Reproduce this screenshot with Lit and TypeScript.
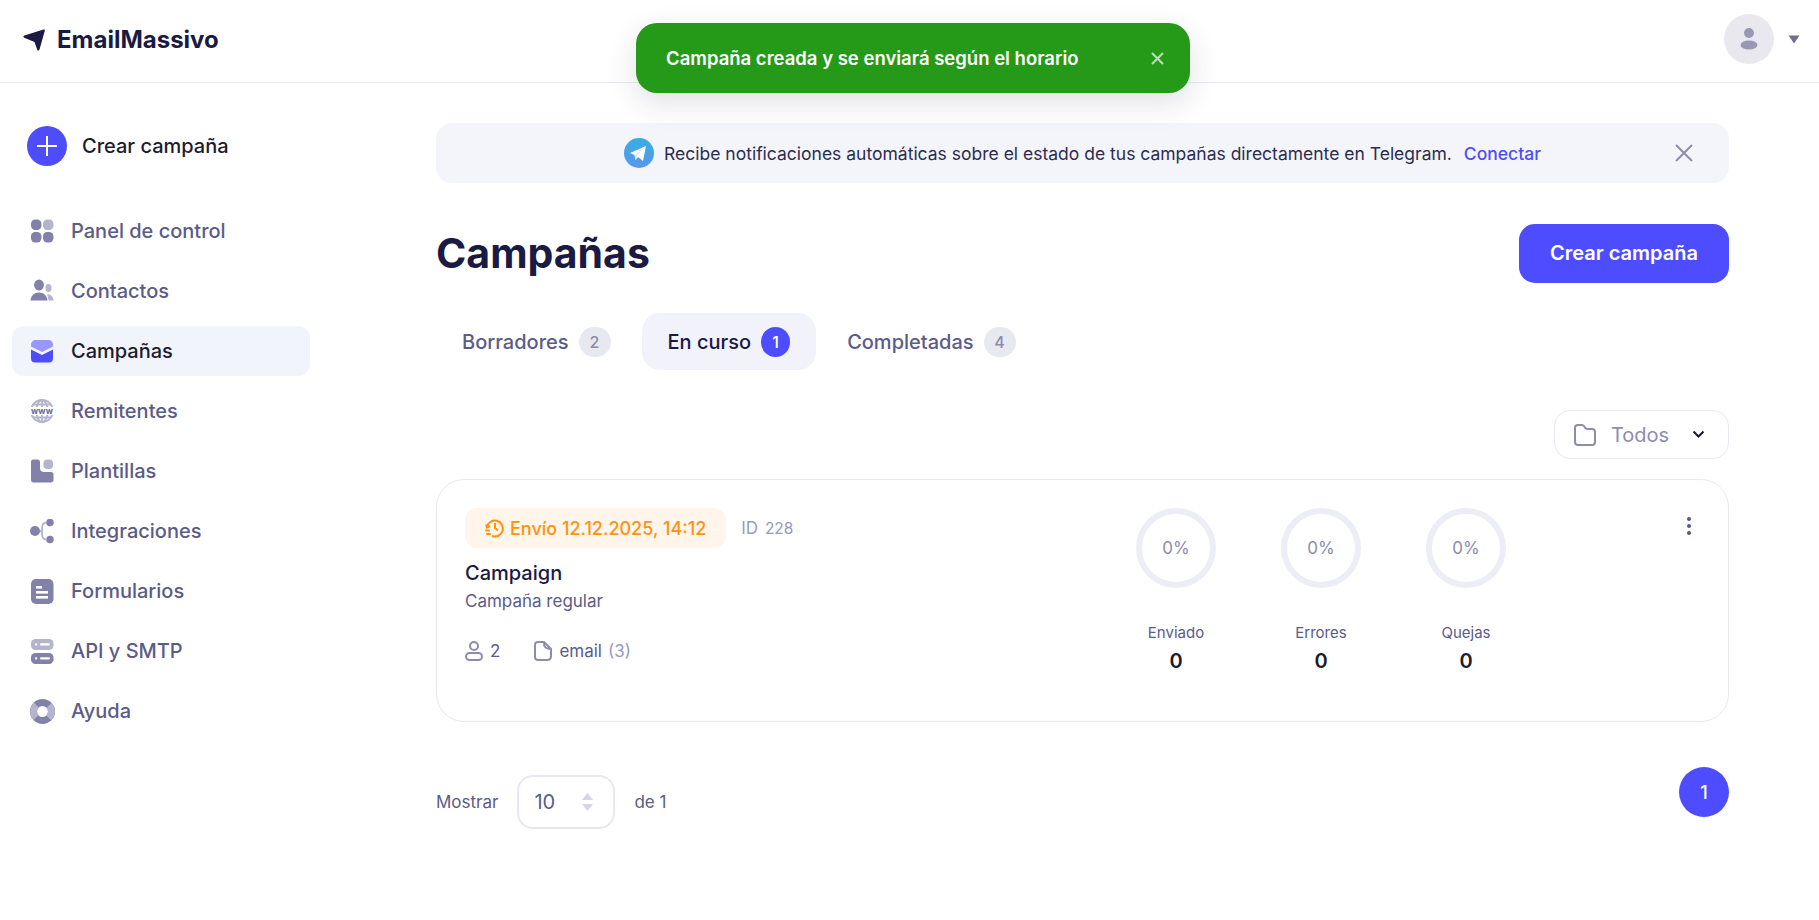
import { LitElement, html, css, svg } from 'lit';
import { customElement } from 'lit/decorators.js';

const DARK = '#8181aa';
const LIGHT = '#b4b4cd';

const icons: Record<string, unknown> = {
  panel: svg`<rect x="1" y="0.5" width="10.4" height="10.4" rx="4.2" fill=${DARK}/><rect x="13" y="0.5" width="10.4" height="10.4" rx="4.2" fill=${LIGHT}/><rect x="1" y="13" width="10.4" height="10.4" rx="4.2" fill=${DARK}/><rect x="13" y="13" width="10.4" height="10.4" rx="4.2" fill=${DARK}/>`,
  contactos: svg`<ellipse cx="9" cy="6" rx="4.9" ry="5.6" fill=${DARK}/><path d="M0.5 21.5c.4-4.6 3.6-8 8.500-8s8 3.400 8.500 8z" fill=${DARK}/><ellipse cx="18.500" cy="9" rx="3" ry="4" fill=${LIGHT}/><path d="M17.200 15.500c3.300-.5 6 2 6.500 6h-5z" fill=${LIGHT}/>`,
  campanas: svg`<path d="M1 6c0-3 2-5 5-5h12c3 0 5 2 5 5v1.500l-11 5.500-11-5.500z" fill="#9797ff"/><path d="M1 10.500l11 5.500 11-5.500v9c0 2.500-1.500 4-4 4h-14c-2.500 0-4-1.500-4-4z" fill="#4d4dff"/>`,
  remitentes: svg`<g fill="none" stroke=${LIGHT} stroke-width="1.800"><circle cx="12" cy="12" r="11"/><ellipse cx="12" cy="12" rx="5.500" ry="11"/><path d="M12 1v22M3 5.500h18M3 18.500h18"/></g><rect x="-1" y="8" width="26" height="8" fill="#fff"/><text class="www" x="12" y="15" text-anchor="middle" fill="#65658f">www</text>`,
  plantillas: svg`<path d="M1 3c0-1.700 1-2.500 2.500-2.500h4c1.500 0 2.500 1 2.500 2.500v6c0 2.500 1.500 4 4 4h7c1.500 0 2.500 1 2.500 2.500v5.500c0 1.500-1 2.500-2.500 2.500h-17.500c-1.500 0-2.500-1-2.500-2.500z" fill=${DARK}/><rect x="13.500" y="0.500" width="9.500" height="9.500" rx="3.800" fill=${LIGHT}/>`,
  integraciones: svg`<circle cx="5" cy="12" r="5" fill=${DARK}/><circle cx="20" cy="3.500" r="3.800" fill=${DARK}/><circle cx="20" cy="20.500" r="3.800" fill=${DARK}/><path d="M16.500 3.500c-4 0-4.500 3-4.500 6v5c0 3 .5 6 4.500 6M10 12h2" fill="none" stroke=${LIGHT} stroke-width="1.800"/>`,
  formularios: svg`<rect x="1" y="0" width="22.500" height="25" rx="5" fill=${DARK}/><rect x="6" y="7" width="6" height="2.600" fill="#fff"/><rect x="6" y="12" width="12" height="2.600" fill="#fff"/><rect x="6" y="17" width="12" height="2.600" fill="#fff"/>`,
  api: svg`<rect x="1" y="0" width="22.500" height="11" rx="4.500" fill=${LIGHT}/><rect x="1" y="14" width="22.500" height="11" rx="4.500" fill=${DARK}/><rect x="5" y="4.300" width="2.200" height="2.200" rx="1" fill="#fff"/><rect x="10" y="4.300" width="10" height="2.200" rx="1" fill="#fff"/><rect x="5" y="18.300" width="2.200" height="2.200" rx="1" fill="#fff"/><rect x="10" y="18.300" width="10" height="2.200" rx="1" fill="#fff"/>`,
  ayuda: svg`<circle cx="12.500" cy="12.500" r="9" fill="none" stroke=${DARK} stroke-width="7"/><circle cx="12.500" cy="12.500" r="9" fill="none" stroke=${LIGHT} stroke-width="7" stroke-dasharray="14.100 14.200" stroke-dashoffset="7"/>`,
};

const nav = [
  { id: 'panel', label: 'Panel de control' },
  { id: 'contactos', label: 'Contactos' },
  { id: 'campanas', label: 'Campañas', active: true },
  { id: 'remitentes', label: 'Remitentes' },
  { id: 'plantillas', label: 'Plantillas' },
  { id: 'integraciones', label: 'Integraciones' },
  { id: 'formularios', label: 'Formularios' },
  { id: 'api', label: 'API y SMTP' },
  { id: 'ayuda', label: 'Ayuda' },
];

const tabs = [
  { label: 'Borradores', count: 2 },
  { label: 'En curso', count: 1, active: true },
  { label: 'Completadas', count: 4 },
];

const stats = ['Enviado', 'Errores', 'Quejas'];

@customElement('app-root')
export class AppRoot extends LitElement {
  static styles = css`
    :host {
      display: block;
      position: relative;
      height: 920px;
      overflow: hidden;
      background: #fff;
      font-family: Inter, 'Liberation Sans', sans-serif;
      color: #1a1a42;
    }
    svg { display: block; flex: none; }

    .topbar {
      height: 82px;
      border-bottom: 1px solid #e8e8f0;
      display: flex;
      align-items: center;
      padding: 0 19px 0 23px;
    }
    .logo { display: flex; align-items: center; gap: 12px; font-size: 24px; font-weight: 700; margin-top: -3px; }
    .account { margin-left: auto; display: flex; align-items: center; gap: 14px; margin-top: -4px; }
    .avatar {
      width: 50px; height: 50px; border-radius: 50%;
      background: #e8e8ee;
      display: flex; align-items: center; justify-content: center;
    }

    .toast {
      position: absolute;
      left: 636px; top: 23px;
      width: 554px; height: 70px;
      box-sizing: border-box;
      padding: 0 26px 0 30px;
      background: #259a19;
      border-radius: 21px;
      color: #fff;
      display: flex; align-items: center; justify-content: space-between;
      font-size: 18.500px; font-weight: 600;
      box-shadow: 0 10px 30px rgba(40, 40, 80, 0.14);
      white-space: nowrap;
    }

    .layout { display: flex; }
    .sidebar { width: 310px; margin-right: 126px; padding: 43px 0 0 12px; box-sizing: border-box; flex: none; }
    .create {
      display: flex; align-items: center; gap: 15px;
      margin-left: 15px; margin-bottom: 40px;
      font-size: 20px; font-weight: 500; color: #1c1c2e;
    }
    .create-dot {
      width: 40px; height: 40px; border-radius: 50%;
      background: #4d4dff;
      display: flex; align-items: center; justify-content: center;
    }
    .nav { display: flex; flex-direction: column; gap: 10px; }
    .nav-item {
      height: 50px; border-radius: 12px;
      display: flex; align-items: center; gap: 16px;
      padding-left: 18px;
      font-size: 20px; font-weight: 500; color: #5b5b88;
    }
    .nav-item.active { background: #f1f4fa; color: #1c1c2e; }

    .main { flex: 1; padding: 40px 90px 0 0; min-width: 0; }

    .banner {
      height: 60px; border-radius: 16px;
      background: #f4f5fb;
      position: relative;
      display: flex; align-items: center; justify-content: center;
      gap: 10px;
      font-size: 17.500px; color: #2c2c50;
      padding-right: 0;
    }
    .banner a { color: #4d4dff; margin-left: 2px; font-weight: 500; }
    .banner-close { position: absolute; right: 36px; top: 21px; }

    .title-row { display: flex; justify-content: space-between; align-items: center; margin-top: 40px; }
    h1 { margin: 0; font-size: 41px; font-weight: 700; line-height: 60px; }
    .primary {
      width: 210px; height: 59px; border-radius: 16px;
      background: #4d4dff; color: #fff;
      display: flex; align-items: center; justify-content: center;
      font-size: 20px; font-weight: 600;
    }

    .tabs { display: flex; margin-top: 30px; }
    .tab {
      height: 57px; box-sizing: border-box;
      padding: 0 26px;
      border-radius: 18px;
      display: flex; align-items: center; gap: 10px;
      font-size: 20px; font-weight: 500; color: #5b5b88;
    }
    .tab.active { background: #f2f3fa; color: #1a1a42; }
    .tab + .tab { margin-left: 5px; }
    .count {
      min-width: 30px; width: 32px; height: 30px; border-radius: 15px;
      background: #e8e8ef; color: #8c8cae;
      display: flex; align-items: center; justify-content: center;
      font-size: 16px; font-weight: 500;
    }
    .tab.active .count { background: #4d4dff; color: #fff; width: 29px; min-width: 29px; }

    .filter-row { display: flex; justify-content: flex-end; margin-top: 40px; }
    .filter {
      width: 175px; height: 49px; box-sizing: border-box;
      border: 1px solid #e8e8f0; border-radius: 16px;
      padding: 0 23px 0 18px;
      display: flex; align-items: center;
      font-size: 20px; color: #8c8cb0;
    }
    .filter span { margin-left: 14px; flex: 1; }

    .card {
      margin-top: 20px;
      height: 243px; box-sizing: border-box;
      border: 1px solid #e8e8f0; border-radius: 28px;
      padding: 28px 37px 0 28px;
      display: flex;
    }
    .info { width: 661px; flex: none; }
    .info-top { display: flex; align-items: center; gap: 15px; }
    .badge {
      height: 40px; padding: 0 20px; border-radius: 12px;
      background: #fff5ea; color: #ff9210;
      display: flex; align-items: center; gap: 5px;
      font-size: 18px; font-weight: 500;
    }
    .id { color: #9a9abb; font-size: 17px; }
    .id small { font-size: 15.500px; margin-left: 2px; }
    .name { margin-top: 11px; font-size: 20px; font-weight: 500; line-height: 28px; }
    .kind { margin-top: 2px; font-size: 17px; color: #5b5b88; line-height: 24px; }
    .meta { margin-top: 28px; display: flex; align-items: center; font-size: 17px; color: #5b5b88; }
    .meta .gap { margin-left: 7px; }
    .meta .doc { margin-left: 34px; }
    .meta .muted { color: #9a9abb; margin-left: 6px; }

    .stats { display: flex; gap: 45px; }
    .stat { width: 100px; display: flex; flex-direction: column; align-items: center; }
    .ring {
      width: 80px; height: 80px; box-sizing: border-box;
      border: 6px solid #ecedf5; border-radius: 50%;
      display: flex; align-items: center; justify-content: center;
      font-size: 17px; color: #8c8cac;
    }
    .stat-label { margin-top: 35px; font-size: 15px; line-height: 20px; color: #5b5b88; }
    .stat-value { margin-top: 5px; font-size: 20px; font-weight: 600; line-height: 26px; color: #1c1c2e; }
    .menu { margin-left: auto; display: flex; flex-direction: column; gap: 3px; padding-top: 9px; }
    .menu i { display: block; width: 4px; height: 4px; border-radius: 50%; background: #56568a; }

    .pager { margin-top: 45px; display: flex; align-items: flex-start; }
    .pager-left { display: flex; align-items: center; font-size: 17px; color: #5b5b88; margin-top: 8px; }
    .select {
      width: 98px; height: 54px; box-sizing: border-box;
      margin: 0 19px;
      border: 2px solid #e8e8ef; border-radius: 16px;
      padding: 0 20px 0 15px;
      display: flex; align-items: center; justify-content: space-between;
      font-size: 20px;
    }
    .page {
      margin-left: auto;
      width: 50px; height: 50px; border-radius: 50%;
      background: #4d4dff; color: #fff;
      display: flex; align-items: center; justify-content: center;
      font-size: 18px; font-weight: 500;
    }
    .www { font: 700 8.500px Inter, sans-serif; letter-spacing: 0.1px; }
  `;

  render() {
    return html`
      <div class="topbar">
        <div class="logo">
          <svg width="22" height="22" viewBox="0 0 22 22"><path d="M20.500.500c1-.3 1.500.3 1.300 1.300l-5.300 18.700c-.4 1.300-1.800 1.400-2.300.2l-2.700-7.700-10.300-4.200c-1.100-.5-1-1.800.2-2.200z" fill="#1a1a42"/></svg>
          EmailMassivo
        </div>
        <div class="account">
          <div class="avatar">
            <svg width="18" height="22" viewBox="0 0 18 22"><circle cx="9" cy="5" r="5" fill="#9898b4"/><ellipse cx="9" cy="17" rx="8.500" ry="4.500" fill="#9898b4"/></svg>
          </div>
          <svg width="12" height="9" viewBox="0 0 12 9"><path d="M0.500.500h11l-5.500 8z" fill="#6f6f96"/></svg>
        </div>
      </div>

      <div class="layout">
        <aside class="sidebar">
          <div class="create">
            <div class="create-dot">
              <svg width="20" height="20" viewBox="0 0 20 20"><path d="M10 0v20M0 10h20" stroke="#fff" stroke-width="2"/></svg>
            </div>
            Crear campaña
          </div>
          <div class="nav">
            ${nav.map(n => html`
              <div class="nav-item ${n.active ? 'active' : ''}">
                <svg width="25" height="25" viewBox="0 0 25 25">${icons[n.id]}</svg>
                ${n.label}
              </div>
            `)}
          </div>
        </aside>

        <main class="main">
          <div class="banner">
            <svg width="30" height="30" viewBox="0 0 30 30">
              <defs><linearGradient id="tg" x1="0" y1="0" x2="0" y2="1"><stop offset="0" stop-color="#37aee2"/><stop offset="1" stop-color="#5a96ee"/></linearGradient></defs>
              <circle cx="15" cy="15" r="15" fill="url(#tg)"/>
              <path d="M6 15l16-7-3 15-5-4-2.500 3-1-5z" fill="#fff"/>
              <path d="M10.500 17l9-7-7 8-.5 4z" fill="#d4e4f4"/>
            </svg>
            <span>Recibe notificaciones automáticas sobre el estado de tus campañas directamente en Telegram.</span>
            <a>Conectar</a>
            <svg class="banner-close" width="18" height="18" viewBox="0 0 18 18"><path d="M1 1l16 16M17 1L1 17" stroke="#8c8ca8" stroke-width="2"/></svg>
          </div>

          <div class="title-row">
            <h1>Campañas</h1>
            <div class="primary">Crear campaña</div>
          </div>

          <div class="tabs">
            ${tabs.map(t => html`
              <div class="tab ${t.active ? 'active' : ''}">${t.label}<span class="count">${t.count}</span></div>
            `)}
          </div>

          <div class="filter-row">
            <div class="filter">
              <svg width="24" height="24" viewBox="0 0 24 24"><path d="M2 5c0-1.700 1-3 3-3h4c1.500 0 2.200 1 3 2.500.5 1 1 1.500 2.500 1.500h4.500c2 0 3 1.300 3 3v10c0 1.700-1 3-3 3h-14c-2 0-3-1.300-3-3z" fill="none" stroke="#8c8cb0" stroke-width="2"/></svg>
              <span>Todos</span>
              <svg width="13" height="9" viewBox="0 0 13 9"><path d="M1.500 1.500l5 5 5-5" fill="none" stroke="#1a1a2e" stroke-width="2"/></svg>
            </div>
          </div>

          <div class="card">
            <div class="info">
              <div class="info-top">
                <div class="badge">
                  <svg width="20" height="20" viewBox="0 0 20 20" fill="none" stroke="#ff9210" stroke-width="2"><path d="M2 9a8 8 0 1 1 5 9M1 6.500l1 3 3-1.500M10 5v5l3 2.500"/><path d="M1 12.500h3M2 16h3" stroke-linecap="round"/></svg>
                  Envío 12.12.2025, 14:12
                </div>
                <div class="id">ID <small>228</small></div>
              </div>
              <div class="name">Campaign</div>
              <div class="kind">Campaña regular</div>
              <div class="meta">
                <svg width="18" height="20" viewBox="0 0 18 20" fill="none" stroke="#8c8cb0" stroke-width="2"><circle cx="9" cy="5" r="4"/><rect x="1" y="12" width="16" height="7" rx="3.500"/></svg>
                <span class="gap">2</span>
                <svg class="doc" width="18" height="20" viewBox="0 0 18 20" fill="none" stroke="#8c8cb0" stroke-width="2"><path d="M4 1h6l7 7v7c0 2.500-1.500 4-4 4h-9c-2 0-3-1.500-3-3v-12c0-2 1-3 3-3zM10 1c-.5 5 2 7 7 7"/></svg>
                <span class="gap">email</span><span class="muted">(3)</span>
              </div>
            </div>
            <div class="stats">
              ${stats.map(s => html`
                <div class="stat">
                  <div class="ring">0%</div>
                  <div class="stat-label">${s}</div>
                  <div class="stat-value">0</div>
                </div>
              `)}
            </div>
            <div class="menu"><i></i><i></i><i></i></div>
          </div>

          <div class="pager">
            <div class="pager-left">
              Mostrar
              <div class="select">
                <span>10</span>
                <svg width="11" height="18" viewBox="0 0 11 18"><path d="M5.500 0l5.500 7h-11zM5.500 18l5.500-7h-11z" fill="#d5d5e4"/></svg>
              </div>
              de 1
            </div>
            <div class="page">1</div>
          </div>
        </main>
      </div>

      <div class="toast">
        Campaña creada y se enviará según el horario
        <svg width="13" height="13" viewBox="0 0 13 13"><path d="M1 1l11 11M12 1L1 12" stroke="#b9dcb5" stroke-width="2.200"/></svg>
      </div>
    `;
  }
}
